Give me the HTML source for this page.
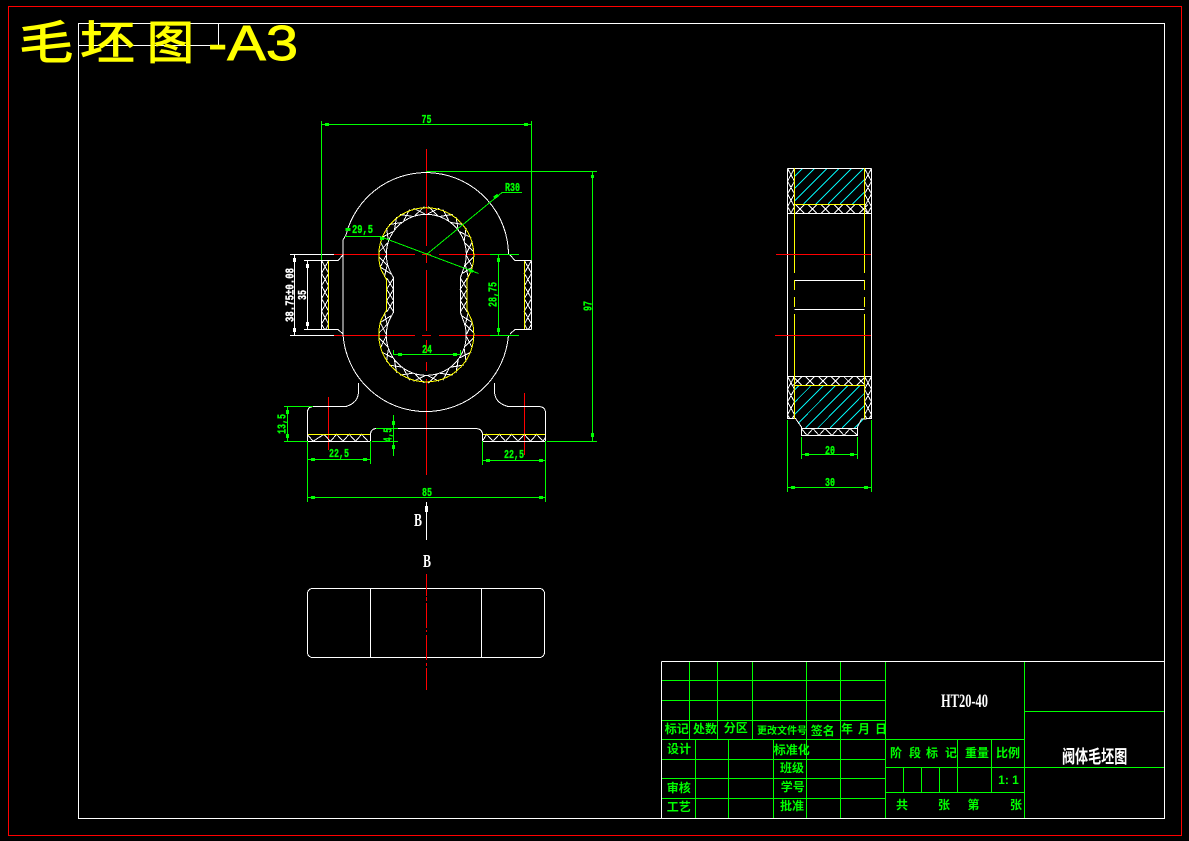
<!DOCTYPE html>
<html lang="zh">
<head>
<meta charset="utf-8">
<title>毛坯图-A3</title>
<style>
html,body{margin:0;padding:0;background:#000;width:1189px;height:841px;overflow:hidden}
svg{display:block}
.l{fill:none;shape-rendering:crispEdges;stroke-width:1}
.w{stroke:#fff}.g{stroke:#0f0}.y{stroke:#ff0}.r{stroke:#f00}.c{stroke:#0ee}
.d{font-family:"Liberation Mono",monospace;font-weight:700;font-size:12px;stroke-width:.35}
.t{font-family:"Liberation Sans","Noto Sans CJK SC",sans-serif;font-weight:700;font-size:12px;fill:#0f0;text-anchor:middle}
</style>
</head>
<body>
<svg width="1189" height="841" viewBox="0 0 1189 841" xmlns="http://www.w3.org/2000/svg">
<defs>
<path id="rc" d="M421.3 214.3L431.8 206.8M431.3 214.3L420.8 206.8"/>
<path id="fl" d="M321.5 260.5l7.2 12.7l-7.2 12.7l7.2 12.7l-7.2 12.7l7.2 12.7l-3 5.3M328.7 260.5l-7.2 12.7l7.2 12.7l-7.2 12.7l7.2 12.7l-7.2 12.7l3 5.3"/>
<path id="nk" d="M386.7 278l6.9 11.3l-6.9 11.3l6.9 11.4M393.6 278l-6.9 11.3l6.9 11.3l-6.9 11.4"/>
<clipPath id="c1"><rect x="794.3" y="168.3" width="70" height="35.7"/></clipPath>
<clipPath id="c2"><path d="M794.3 385.3H864.3V418L857.7 428H801.3L794.3 418Z"/></clipPath>
</defs>
<rect width="1189" height="841" fill="#000"/>

<!-- frames -->
<rect class="l r" x="8.5" y="6.5" width="1173" height="829"/>
<rect class="l w" x="78.5" y="23.5" width="1086" height="795"/>
<path class="l w" d="M78 45.5H218.5V23"/>

<!-- title -->
<g font-family="'Noto Sans CJK SC',sans-serif" font-weight="400" font-size="46" fill="#ff0" stroke="#ff0" stroke-width="1">
<text transform="translate(19 59) scale(1.18 1)">毛</text>
<text transform="translate(80 59) scale(1.2 1)">坯</text>
<text transform="translate(147 59) scale(1.02 1)">图</text>
</g>
<text x="208" y="60" textLength="90" lengthAdjust="spacingAndGlyphs" font-family="'Liberation Sans',sans-serif" font-weight="400" font-size="49" fill="#ff0" stroke="#ff0" stroke-width=".9">-A3</text>

<!-- main view: red centre lines -->
<path class="l r" d="M334 254.5H415M422 254.5H431M439 254.5H494M334 335.5H415M422 335.5H431M439 335.5H494"/>
<path class="l r" d="M426.5 149V246M426.5 253V263M426.5 270V331M426.5 340V353M426.5 362V371M426.5 379V475"/>
<path class="l r" d="M328.5 397V450M524.5 393V455"/>

<!-- main view: hatching -->
<g class="l w">
<use href="#fl"/>
<use href="#fl" transform="translate(202.8 0)"/>
<use href="#nk"/>
<use href="#nk" transform="translate(73.6 0)"/>
<use href="#rc" transform="rotate(-9 426.3 254.3)"/><use href="#rc" transform="rotate(9 426.3 254.3)"/>
<use href="#rc" transform="rotate(-27 426.3 254.3)"/><use href="#rc" transform="rotate(27 426.3 254.3)"/>
<use href="#rc" transform="rotate(-45 426.3 254.3)"/><use href="#rc" transform="rotate(45 426.3 254.3)"/>
<use href="#rc" transform="rotate(-63 426.3 254.3)"/><use href="#rc" transform="rotate(63 426.3 254.3)"/>
<use href="#rc" transform="rotate(-81 426.3 254.3)"/><use href="#rc" transform="rotate(81 426.3 254.3)"/>
<use href="#rc" transform="rotate(-99 426.3 254.3)"/><use href="#rc" transform="rotate(99 426.3 254.3)"/>
<use href="#rc" transform="rotate(-112 426.3 254.3)"/><use href="#rc" transform="rotate(112 426.3 254.3)"/>
<g transform="translate(0 81)">
<use href="#rc" transform="rotate(171 426.3 254.3)"/><use href="#rc" transform="rotate(189 426.3 254.3)"/>
<use href="#rc" transform="rotate(153 426.3 254.3)"/><use href="#rc" transform="rotate(207 426.3 254.3)"/>
<use href="#rc" transform="rotate(135 426.3 254.3)"/><use href="#rc" transform="rotate(225 426.3 254.3)"/>
<use href="#rc" transform="rotate(117 426.3 254.3)"/><use href="#rc" transform="rotate(243 426.3 254.3)"/>
<use href="#rc" transform="rotate(99 426.3 254.3)"/><use href="#rc" transform="rotate(261 426.3 254.3)"/>
<use href="#rc" transform="rotate(81 426.3 254.3)"/><use href="#rc" transform="rotate(279 426.3 254.3)"/>
<use href="#rc" transform="rotate(68 426.3 254.3)"/><use href="#rc" transform="rotate(292 426.3 254.3)"/>
</g>
<path d="M307.3 434.3L313 441.3L324 434.3L330.3 441.3L336.7 434.3L343 441.3L349.2 434.3L355.5 441.3L361.7 434.3L368 441.3"/>
<path d="M482.3 441.3L486.7 434.3L493 441.3L499.3 434.3L505.5 441.3L511.7 434.3L518 441.3L524.3 434.3L530.5 441.3L536.7 434.3L543 441.3L545.7 437"/>
</g>

<!-- main view: yellow -->
<g class="l y">
<path d="M386.7 280L381 269.5A47.5 47.5 0 1 1 471.6 269.5L467 280V310L471.6 320.1A47.5 47.5 0 1 1 381 320.1L386.7 310Z"/>
<path d="M328.5 260.5V329.5M524.5 260.5V329.5"/>
<path d="M307.5 434.5H370.5M482.5 434.5H545.5"/>
</g>

<!-- main view: white outline -->
<g class="l w">
<path d="M393.6 278L389.5 270A40 40 0 1 1 463.1 270L460.3 278V312L463 319.6A40 40 0 1 1 389.5 319.6L393.6 312Z"/>
<path d="M508.5 254A82.5 82.5 0 0 0 346 235L343 240V335A83 83 0 0 0 508.5 335"/>
<path d="M290 254.5H334M290 335.5H334M304 260.5H338L343 255M304 329.5H338L343 334"/>
<path d="M321.5 260.5V329.5M531.5 260.5V329.5"/>
<path d="M510 255L515 260.5H531.5M510 334L515 329.5H531.5"/>
<path d="M358.5 383V392Q358 403 346 406.5H313Q307.5 407 307.5 412V441.5H370.5V434Q371 428.5 377 428.5H476Q482 429 482.5 434V441.5H545.5V412Q545 407 539.5 406.5H508Q495 403 494.5 392V383"/>
<path d="M294.5 254.5V335.5M307.5 260.5V329.5"/>
<path d="M426.5 502V540"/>
</g>
<path class="l w" style="stroke-width:3" d="M294.5 258V262M294.5 328V332M307.5 264V268M307.5 322V326M426.5 506V512"/>

<!-- main view: green dims -->
<g class="l g">
<path d="M321.5 121V260M531.5 121V260M321 124.5H532"/>
<path d="M426 171.5H597M547 441.5H597M592.5 171.5V441.5"/>
<path d="M490 254.5H519M490 335.5H519M498.5 254.5V335.5"/>
<path d="M345 236.5H380L478.5 273.5M426.5 254.5L502 192.5H522"/>
<path d="M393.5 350V354.5H460.5V350"/>
<path d="M284 406.5H313M284 441.5H307M287.5 406.5V441.5"/>
<path d="M372 441.5H398M376 428.5H398M393.5 415V456"/>
<path d="M307.5 459.5H370.5M370.5 441V464M482.5 460.5H545.5M482.5 441V465"/>
<path d="M307.5 441V502M545.5 441V502M307.5 497.5H545.5"/>
<path d="M801.5 437V459M857.5 437V459M801.5 454.5H857.5"/>
<path d="M787.5 420V492M871.5 420V492M787.5 487.5H871.5"/>
</g>
<path class="l g" style="stroke-width:3" d="M325 124.5H329M524 124.5H528M592.5 175V178M592.5 433V437M498.5 258V262M498.5 328V332M287.5 410V414M287.5 434V438M393.5 421V425M393.5 445V449M311 459.5H315M363 459.5H367M486 460.5H490M539 460.5H543M311 497.5H315M539 497.5H543M398 354.5H402M453 354.5H457M805 454.5H809M850 454.5H854M791 487.5H795M864 487.5H868M494 198L498 195M380 238.5H384M469 270L473 271.5"/>
<path class="l g" style="stroke-width:5" d="M348 228V231"/>

<g class="d" fill="#0f0" stroke="#0f0">
<text x="421.5" y="123" textLength="10" lengthAdjust="spacingAndGlyphs">75</text>
<text x="505" y="191" textLength="15" lengthAdjust="spacingAndGlyphs">R30</text>
<text x="352" y="233" textLength="21" lengthAdjust="spacingAndGlyphs">29,5</text>
<text x="422" y="353" textLength="10" lengthAdjust="spacingAndGlyphs">24</text>
<text x="329" y="457" textLength="20" lengthAdjust="spacingAndGlyphs">22,5</text>
<text x="504" y="458" textLength="20" lengthAdjust="spacingAndGlyphs">22,5</text>
<text x="422" y="496" textLength="10" lengthAdjust="spacingAndGlyphs">85</text>
<text x="825" y="454" textLength="10" lengthAdjust="spacingAndGlyphs">20</text>
<text x="825" y="486" textLength="10" lengthAdjust="spacingAndGlyphs">30</text>
<text transform="translate(591.5 311) rotate(-90)" textLength="10" lengthAdjust="spacingAndGlyphs">97</text>
<text transform="translate(496.5 307) rotate(-90)" textLength="25" lengthAdjust="spacingAndGlyphs">28,75</text>
<text transform="translate(285.5 434) rotate(-90)" textLength="20" lengthAdjust="spacingAndGlyphs">13,5</text>
<text transform="translate(391.5 442) rotate(-90)" textLength="14" lengthAdjust="spacingAndGlyphs">4,5</text>
</g>
<g class="d" fill="#fff" stroke="#fff">
<text transform="translate(293.5 322) rotate(-90)" textLength="54" lengthAdjust="spacingAndGlyphs">38.75±0.08</text>
<text transform="translate(306 300) rotate(-90)" textLength="10" lengthAdjust="spacingAndGlyphs">35</text>
</g>
<g font-family="'Liberation Serif',serif" font-weight="700" font-size="18" fill="#fff">
<text x="414" y="526" textLength="8" lengthAdjust="spacingAndGlyphs">B</text>
<text x="423" y="567" textLength="8" lengthAdjust="spacingAndGlyphs">B</text>
</g>

<!-- lower view -->
<rect class="l w" x="307.5" y="588.5" width="237" height="69" rx="5" ry="5"/>
<path class="l w" d="M370.5 588V658M481.5 588V658"/>
<path class="l r" d="M426.5 574V596M426.5 597V601M426.5 603V628M426.5 630V632M426.5 635V660M426.5 663V666M426.5 668V690"/>

<!-- side view -->
<g class="l c" clip-path="url(#c1)">
<path d="M767 204L803 168M779.2 204L815.2 168M791.4 204L827.4 168M803.6 204L839.6 168M815.8 204L851.8 168M828 204L864 168M840.2 204L876.2 168M852.4 204L888.4 168"/>
</g>
<g class="l c" clip-path="url(#c2)">
<path d="M756.8 428L799.5 385M769 428L811.7 385M781.2 428L823.9 385M793.4 428L836.1 385M805.6 428L848.3 385M817.8 428L860.5 385M830 428L872.7 385M842.2 428L884.9 385M854.4 428L897.1 385"/>
</g>
<g class="l w">
<path d="M787.5 168.5l7 12.7l-7 12.7l7 12.7l-3.8 6.7M794.5 168.5l-7 12.7l7 12.7l-7 12.7l3.8 6.7"/>
<path d="M864.5 168.5l7 12.7l-7 12.7l7 12.7l-3.8 6.7M871.5 168.5l-7 12.7l7 12.7l-7 12.7l3.8 6.7"/>
<path d="M795.5 204.5l9 9M804.5 204.5l-9 9M808 204.5l9 9M817 204.5l-9 9M820.8 204.5l9 9M829.8 204.5l-9 9M833.8 204.5l9 9M842.8 204.5l-9 9M846.2 204.5l9 9M855.2 204.5l-9 9M858.8 204.5l9 9M867.8 204.5l-9 9"/>
<path d="M787.5 376.5l7 12.7l-7 12.7l7 12.7l-2.3 4.1M794.5 376.5l-7 12.7l7 12.7l-7 12.7l2.3 4.1"/>
<path d="M864.5 376.5l7 12.7l-7 12.7l7 12.7l-2.3 4.1M871.5 376.5l-7 12.7l7 12.7l-7 12.7l2.3 4.1"/>
<path d="M793 376.5l9 9M802 376.5l-9 9M805.7 376.5l9 9M814.7 376.5l-9 9M818.4 376.5l9 9M827.4 376.5l-9 9M831.1 376.5l9 9M840.1 376.5l-9 9M843.8 376.5l9 9M852.8 376.5l-9 9M856.5 376.5l9 9M865.5 376.5l-9 9"/>
<path d="M801.5 428.5L807 435.5L813 428.5L819 435.5L825 428.5L832 435.5L838 428.5L844 435.5L850 428.5L857.5 435.5"/>
<path d="M787.5 168.5H871.5M787.5 168.5V418.5H795.5L801.5 427V435.5H857.5V427L861.5 419L871.5 418.5V168.5"/>
<path d="M787.5 213.5H871.5M787.5 376.5H871.5M801.5 428.5H857.5"/>
<path d="M794.5 280.5H864.5M794.5 309.5H864.5"/>
</g>
<g class="l y">
<path d="M794.5 168V273M794.5 280V290M794.5 297V307M794.5 314V419M864.5 168V273M864.5 280V290M864.5 297V307M864.5 314V419"/>
<path d="M794.5 204.5H864.5M794.5 385.5H864.5"/>
</g>
<path class="l r" d="M776 254.5H871M775 335.5H871"/>

<!-- title block -->
<g class="l g">
<path d="M661 680.5H885M661 700.5H885M661 720.5H885M661 739.5H1024M661 759.5H885M661 778.5H885M661 798.5H885"/>
<path d="M689.5 661V739M717.5 661V739M752.5 661V739M695.5 739V818M728.5 739V818M773.5 739V818M806.5 661V818M840.5 661V818M885.5 661V818"/>
<path d="M1024.5 661V818M1024 711.5H1164M885 767.5H1164M885 792.5H1024M957.5 739V792M991.5 739V792M903.5 767V792M921.5 767V792M939.5 767V792"/>
</g>
<path class="l w" d="M661.5 661.5H1164M661.5 661.5V818"/>

<g class="t">
<text x="676.7" y="733">标记</text>
<text x="705" y="733">处数</text>
<text x="735.7" y="732">分区</text>
<text x="782" y="734" style="font-size:10px">更改文件号</text>
<text x="822.7" y="735">签名</text>
<text x="847" y="733">年</text><text x="864" y="733">月</text><text x="881" y="733">日</text>
<text x="679" y="753">设计</text>
<text x="791.7" y="754">标准化</text>
<text x="792" y="772">班级</text>
<text x="678.7" y="792">审核</text>
<text x="792.7" y="791">学号</text>
<text x="678.7" y="811">工艺</text>
<text x="792" y="810">批准</text>
<text x="896" y="757">阶</text><text x="915" y="757">段</text><text x="932" y="757">标</text><text x="951" y="757">记</text>
<text x="977" y="757">重量</text>
<text x="1008" y="757">比例</text>
<text x="1008.5" y="784">1: 1</text>
<text x="902" y="809">共</text><text x="944" y="809">张</text><text x="973.5" y="809">第</text><text x="1016" y="809">张</text>
</g>
<text x="941" y="707" textLength="47" lengthAdjust="spacingAndGlyphs" font-family="'Liberation Serif',serif" font-weight="700" font-size="19" fill="#fff">HT20-40</text>
<text transform="translate(1062 763) scale(.87 1.2)" font-family="'Noto Sans CJK SC',sans-serif" font-weight="700" font-size="15" fill="#fff">阀体毛坯图</text>
</svg>
</body>
</html>
